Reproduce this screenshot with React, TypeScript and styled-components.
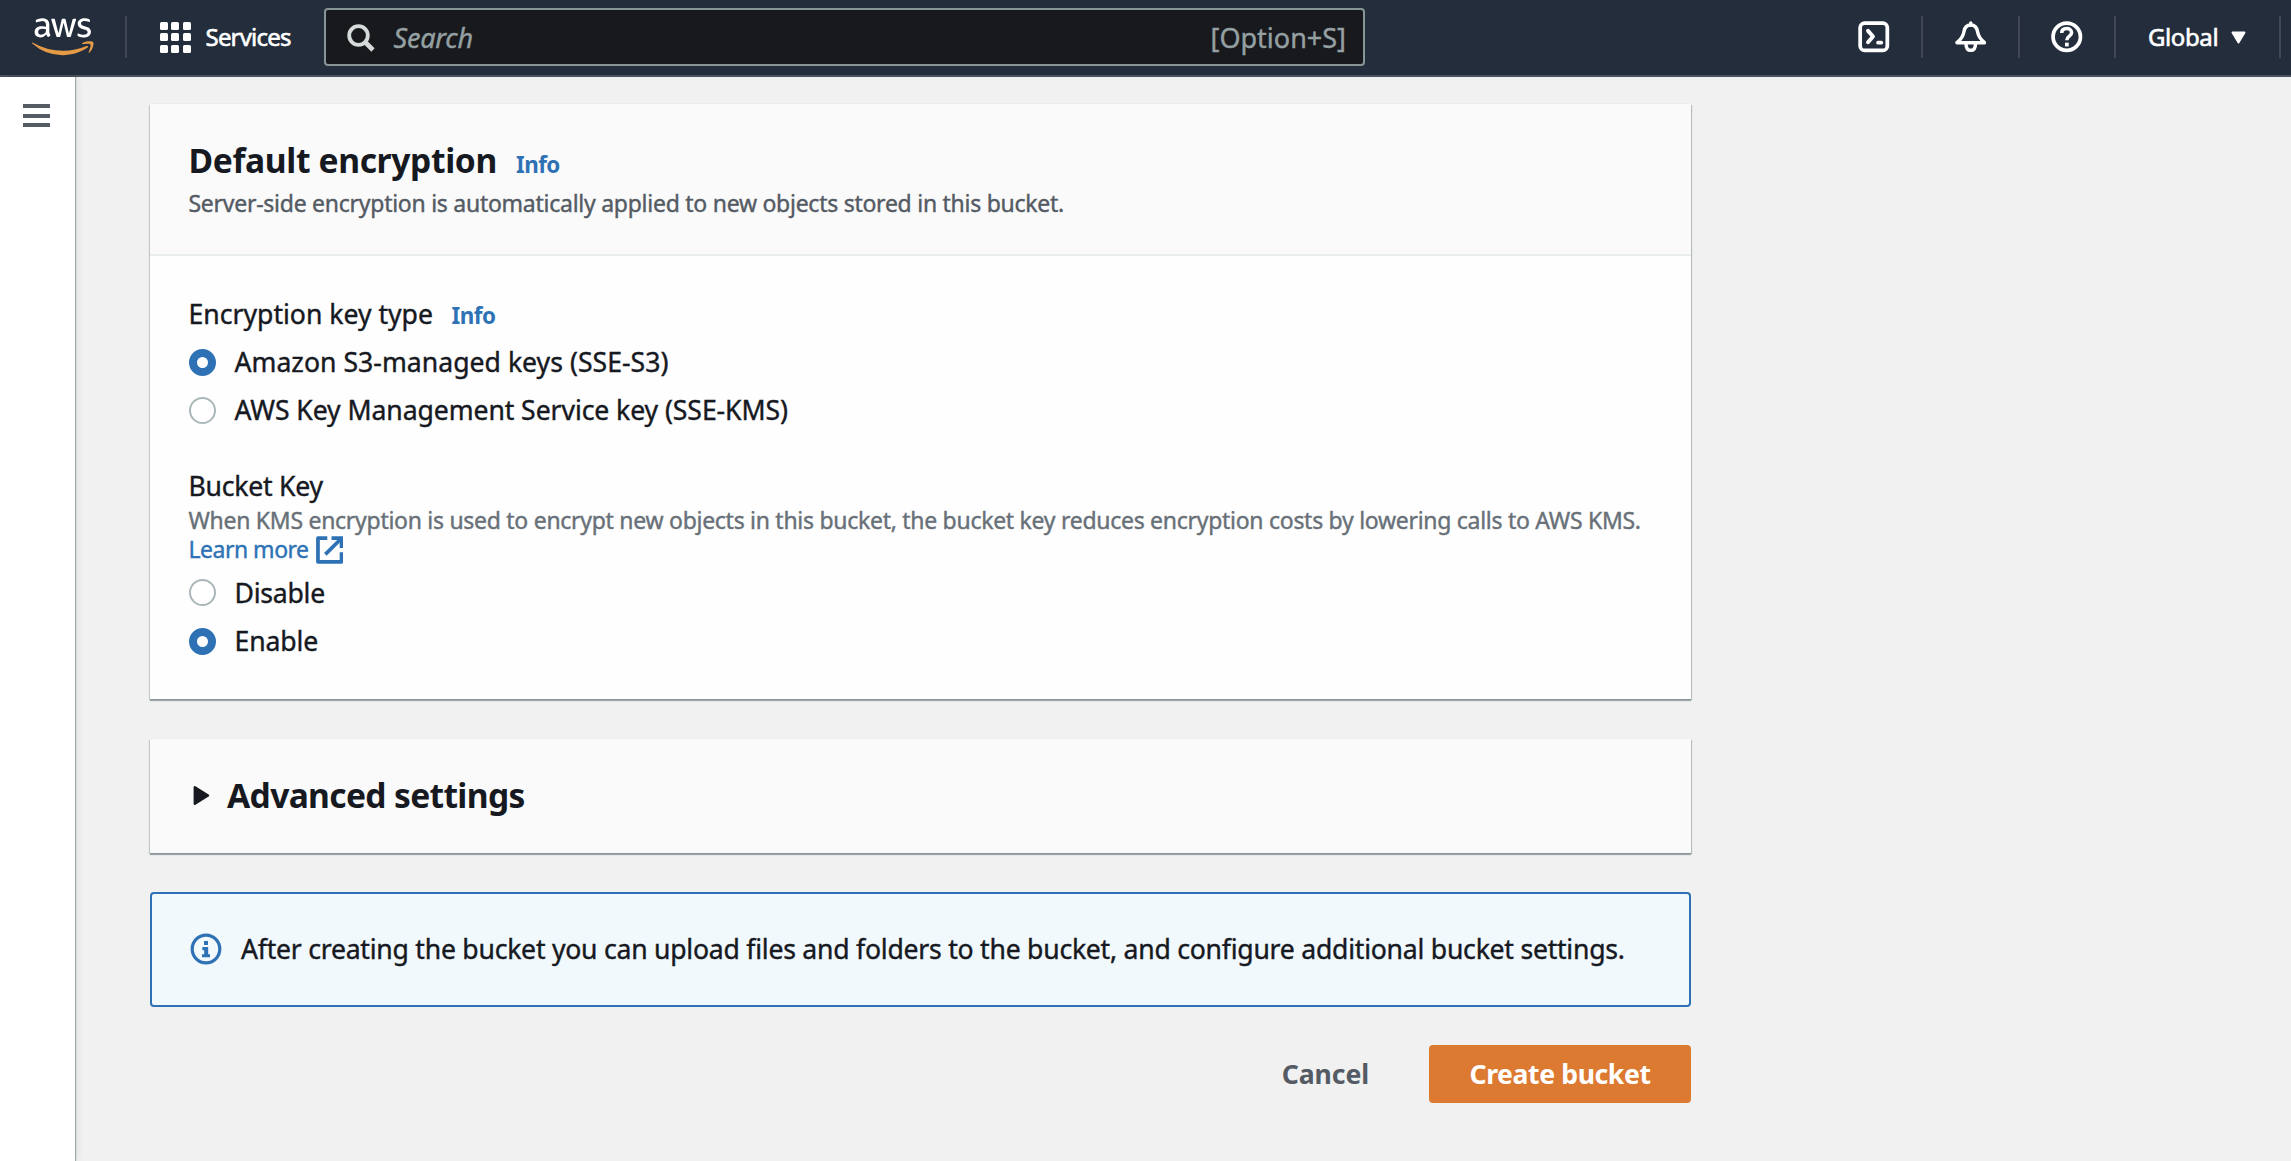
import React, { useState } from 'react';
import styled, { createGlobalStyle, css } from 'styled-components';
import { FaAws } from 'react-icons/fa';

const color = {
  nav: '#242d3c',
  navLine: '#4a525e',
  navDivider: '#414853',
  searchBg: '#17191d',
  searchBorder: '#879596',
  page: '#f1f1f1',
  surface: '#fefefe',
  surfaceAlt: '#fafafa',
  ink: '#16191f',
  muted: '#545b64',
  hint: '#687078',
  link: '#2e72b5',
  orange: '#dd7a32',
};

const GlobalStyle = createGlobalStyle`
  *, *::before, *::after { box-sizing: border-box; }
  body {
    margin: 0;
    background: ${color.page};
    color: ${color.ink};
    font-family: "Noto Sans", "Open Sans", sans-serif;
    -webkit-text-stroke: 0.4px currentColor;
  }
  button { font: inherit; border: 0; background: none; padding: 0; color: inherit; cursor: pointer; }
`;

const Page = styled.div`
  display: flex;
  flex-direction: column;
  width: 2291px;
  height: 1161px;
  overflow: hidden;
`;

/* ---------- top navigation ---------- */

const TopNav = styled.header`
  display: flex;
  align-items: center;
  height: 77px;
  padding: 0 10px 1px 0;
  background: ${color.nav};
  border-bottom: 2px solid ${color.navLine};
  color: #fff;
`;

const Logo = styled.a`
  display: flex;
  width: 125px;
  padding-left: 32px;
  svg { width: 61.5px; height: 49.5px; }
  path { fill: url(#awsFill); }
`;

const GradientDefs = styled.svg`
  width: 0;
  height: 0;
`;

const NavDivider = styled.span`
  flex: none;
  width: 2px;
  height: 42px;
  background: ${color.navDivider};
`;

const ServicesButton = styled.button`
  display: flex;
  align-items: center;
  width: 197px;
  padding-left: 32.5px;
`;

const AppGrid = styled.span`
  display: grid;
  grid-template-columns: repeat(3, 8px);
  gap: 3.5px;
  margin-right: 15px;
`;

const AppDot = styled.span`
  height: 8px;
  border-radius: 1.5px;
  background: #fff;
`;

const NavLabel = styled.span<{ $spacing: number }>`
  padding-bottom: 1px;
  font-size: 24px;
  line-height: 32px;
  letter-spacing: ${(p) => p.$spacing}px;
  -webkit-text-stroke-width: 0.6px;
`;

const SearchBox = styled.div`
  display: flex;
  align-items: center;
  width: 1041px;
  height: 58px;
  padding: 1px 17px 0 21px;
  background: ${color.searchBg};
  border: 2px solid ${color.searchBorder};
  border-radius: 4px;
  color: #95a0a2;
  font-size: 27px;
  line-height: 36px;
`;

const SearchHint = styled.span`
  flex: 1;
  margin-left: 18.5px;
  padding-top: 1px;
  font-style: italic;
  letter-spacing: -0.2px;
`;

const NavRight = styled.div`
  display: flex;
  align-items: center;
  margin-left: auto;
`;

const NavIconButton = styled.button`
  display: flex;
  align-items: center;
  justify-content: center;
  width: 94.5px;
  svg { width: 31.5px; height: 31.5px; }
`;

const RegionButton = styled.button`
  display: flex;
  align-items: center;
  gap: 13px;
  width: 163px;
  padding-left: 32px;
`;

/* ---------- page body ---------- */

const Body = styled.div`
  display: flex;
  flex: 1;
`;

const SideRail = styled.aside`
  width: 75px;
  padding: 27px 0 0 23px;
  background: #fff;
  box-shadow: 1px 0 1px rgba(0, 28, 36, 0.3), 2px 0 8px rgba(0, 28, 36, 0.08);
`;

const MenuButton = styled.button`
  display: flex;
  flex-direction: column;
  gap: 5.6px;
  width: 27px;
`;

const MenuBar = styled.span`
  height: 4px;
  background: ${color.muted};
`;

const Main = styled.main`
  display: flex;
  flex-direction: column;
  width: 1616px;
  padding: 27px 0 0 75px;
`;

const Card = styled.section<{ $gapAfter: number }>`
  margin-bottom: ${(p) => p.$gapAfter}px;
  background: ${color.surface};
  box-shadow: 0 1px 0 #87979a, 0 2px 1px rgba(0, 28, 36, 0.3), 1px 1px 1px rgba(0, 28, 36, 0.2),
    -1px 1px 1px rgba(0, 28, 36, 0.15), 0 -1px 0 rgba(0, 0, 0, 0.02);
`;

const CardHeader = styled.div`
  height: 152px;
  padding: 34px 38px 0 38.5px;
  background: ${color.surfaceAlt};
  border-bottom: 2px solid #eaeded;
`;

const TitleRow = styled.div`
  display: flex;
  align-items: baseline;
`;

const Title = styled.h2<{ $spacing: number }>`
  margin: 0;
  font-size: 33.6px;
  line-height: 44px;
  font-weight: 700;
  letter-spacing: ${(p) => p.$spacing}px;
  -webkit-text-stroke-width: 0;
`;

const InfoLink = styled.a<{ $offset: number }>`
  margin-left: ${(p) => p.$offset}px;
  color: ${color.link};
  font-size: 22.4px;
  line-height: 1;
  font-weight: 700;
  letter-spacing: -0.5px;
  -webkit-text-stroke-width: 0;
`;

const Description = styled.p`
  margin: 5px 0 0;
  color: ${color.muted};
  font-size: 23px;
  line-height: 32px;
  letter-spacing: -0.26px;
`;

const CardBody = styled.div`
  display: flex;
  flex-direction: column;
  gap: 38px;
  height: 442.5px;
  padding: 39px 38px 0 38.5px;
`;

const fieldText = css`
  font-size: 26.6px;
  line-height: 38px;
`;

const Field = styled.fieldset`
  margin: 0;
  padding: 0;
  border: 0;
`;

const FieldLabel = styled.div<{ $spacing?: number }>`
  ${fieldText}
  display: flex;
  align-items: baseline;
  letter-spacing: ${(p) => p.$spacing ?? 0}px;
`;

const Hint = styled.p`
  margin: 1px 0 0;
  color: ${color.hint};
  font-size: 23px;
  line-height: 29px;
  letter-spacing: -0.28px;
  white-space: nowrap;
`;

const LearnMore = styled.a`
  display: flex;
  align-items: center;
  gap: 7px;
  height: 29px;
  color: ${color.link};
  letter-spacing: -0.5px;
`;

const RadioList = styled.div<{ $offset: number }>`
  display: flex;
  flex-direction: column;
  gap: 10.3px;
  margin-top: ${(p) => p.$offset}px;
`;

const RadioRow = styled.label<{ $spacing: number }>`
  ${fieldText}
  display: flex;
  align-items: center;
  gap: 19px;
  letter-spacing: ${(p) => p.$spacing}px;
`;

const RadioMark = styled.span<{ $on: boolean }>`
  width: 27px;
  height: 27px;
  border-radius: 50%;
  background: #fff;
  border: ${(p) => (p.$on ? `8px solid ${color.link}` : '2px solid #aab7b8')};
`;

const ExpandHeader = styled.button`
  display: flex;
  align-items: center;
  width: 100%;
  height: 114px;
  padding: 0 0 3px 43px;
  gap: 17px;
  background: ${color.surfaceAlt};
`;

const Alert = styled.div`
  display: flex;
  align-items: center;
  height: 115px;
  padding-left: 38px;
  gap: 19px;
  background: #f2f9fd;
  border: 2px solid ${color.link};
  border-radius: 4px;
  ${fieldText}
  letter-spacing: -0.24px;
`;

const Actions = styled.div`
  display: flex;
  justify-content: flex-end;
  align-items: center;
  gap: 60px;
  margin-top: 38.5px;
  font-size: 26.6px;
  font-weight: 700;
  -webkit-text-stroke-width: 0;
`;

const CancelButton = styled.button`
  padding-bottom: 1px;
  color: ${color.muted};
  letter-spacing: -0.1px;
`;

const PrimaryButton = styled.button`
  width: 262px;
  height: 58px;
  padding-bottom: 1px;
  background: ${color.orange};
  border-radius: 4px;
  color: #fff;
  letter-spacing: -0.4px;
`;

/* ---------- icons ---------- */

const SearchIcon = () => (
  <svg width="28" height="28" viewBox="0 0 28 28" fill="none" stroke="#d5dbdb" strokeWidth="3.8">
    <circle cx="11.5" cy="11.5" r="9.3" />
    <path d="M18 18l8 8" strokeWidth="4.6" />
  </svg>
);

const TerminalIcon = () => (
  <svg viewBox="0 0 32 32" fill="none" stroke="#fff" strokeWidth="3.8" strokeLinecap="round" strokeLinejoin="round">
    <rect x="2.2" y="2.2" width="27.6" height="27.6" rx="4.5" />
    <path d="M10.200 10l5 5.800-5 5.800" strokeWidth="4" />
    <path d="M20.400 22h3.200" strokeWidth="3.800" />
  </svg>
);

const BellIcon = () => (
  <svg viewBox="0 0 32 32" fill="none" stroke="#fff" strokeWidth="3.5" strokeLinejoin="round" strokeLinecap="round">
    <path d="M16 2v2" />
    <path d="M16 4C12 4 9.600 6.400 9 11.200C8.300 16 6.400 18.400 2 22H30C25.600 18.400 23.700 16 23 11.200C22.400 6.400 20 4 16 4z" />
    <path d="M11.200 23c0 4.200 1.500 6.800 4.800 6.800s4.800-2.600 4.800-6.800" />
  </svg>
);

const HelpIcon = () => (
  <svg viewBox="0 0 32 32" fill="none" stroke="#fff" strokeWidth="3.8">
    <circle cx="16" cy="16" r="13.900" />
    <path d="M10.900 12.200c0-3 2.200-4.500 5-4.500s5 1.500 5 4.200c0 3.600-4.800 3.500-4.800 7.600" strokeWidth="3.600" />
    <path d="M14.200 22h3.800v3.800h-3.800z" fill="#fff" stroke="none" />
  </svg>
);

const CaretDown = () => (
  <svg width="15" height="13" viewBox="0 0 15 13">
    <path d="M1.500 1.500h12L7.500 11.500z" fill="#fff" stroke="#fff" strokeWidth="2" strokeLinejoin="round" />
  </svg>
);

const CaretRight = () => (
  <svg width="17" height="23" viewBox="0 0 17 23">
    <path
      d="M1.800 4.200L15 12.500 1.800 20.800z"
      fill={color.ink}
      stroke={color.ink}
      strokeWidth="2.400"
      strokeLinejoin="round"
    />
  </svg>
);

const ExternalIcon = () => (
  <svg width="27.500" height="28" viewBox="0 0 28 28" fill="none" stroke={color.link} strokeWidth="3.800">
    <path d="M11.500 2H2v24h24v-9.800" strokeLinejoin="round" />
    <path d="M15.800 2H26v10" />
    <path d="M25.500 2.500L9.500 18.500" />
  </svg>
);

const InfoIcon = () => (
  <svg width="32" height="32" viewBox="0 0 32 32" fill="none">
    <circle cx="16" cy="16" r="13.800" stroke={color.link} strokeWidth="3.200" />
    <path
      d="M14 8h4v4h-4zM12.400 14h5.800v7.200h1.800V24.200h-8v-3h2.200v-4h-1.800z"
      fill={color.link}
    />
  </svg>
);

/* ---------- screen ---------- */

type Option = { id: string; label: string; spacing: number };

const keyTypes: Option[] = [
  { id: 's3', label: 'Amazon S3-managed keys (SSE-S3)', spacing: 0.03 },
  { id: 'kms', label: 'AWS Key Management Service key (SSE-KMS)', spacing: -0.08 },
];

const bucketKeyStates: Option[] = [
  { id: 'off', label: 'Disable', spacing: -0.25 },
  { id: 'on', label: 'Enable', spacing: -0.1 },
];

function RadioGroup({ options, initial, offset }: { options: Option[]; initial: string; offset: number }) {
  const [value, setValue] = useState(initial);
  return (
    <RadioList role="radiogroup" $offset={offset}>
      {options.map((o) => (
        <RadioRow key={o.id} $spacing={o.spacing} onClick={() => setValue(o.id)}>
          <RadioMark $on={o.id === value} role="radio" aria-checked={o.id === value} />
          {o.label}
        </RadioRow>
      ))}
    </RadioList>
  );
}

export default function App() {
  return (
    <Page>
      <GlobalStyle />
      <TopNav>
        <GradientDefs aria-hidden>
          <defs>
            <linearGradient id="awsFill" gradientUnits="userSpaceOnUse" x1="0" y1="0" x2="0" y2="512">
              <stop offset="0.57" stopColor="#fff" />
              <stop offset="0.57" stopColor="#e59a45" />
            </linearGradient>
          </defs>
        </GradientDefs>
        <Logo>
          <FaAws />
        </Logo>
        <NavDivider />
        <ServicesButton>
          <AppGrid>
            {Array.from({ length: 9 }, (_, i) => (
              <AppDot key={i} />
            ))}
          </AppGrid>
          <NavLabel $spacing={-0.8}>Services</NavLabel>
        </ServicesButton>
        <SearchBox>
          <SearchIcon />
          <SearchHint>Search</SearchHint>
          <span>[Option+S]</span>
        </SearchBox>
        <NavRight>
          <NavIconButton aria-label="CloudShell">
            <TerminalIcon />
          </NavIconButton>
          <NavDivider />
          <NavIconButton aria-label="Notifications">
            <BellIcon />
          </NavIconButton>
          <NavDivider />
          <NavIconButton aria-label="Help">
            <HelpIcon />
          </NavIconButton>
          <NavDivider />
          <RegionButton>
            <NavLabel $spacing={-0.4}>Global</NavLabel>
            <CaretDown />
          </RegionButton>
          <NavDivider />
        </NavRight>
      </TopNav>

      <Body>
        <SideRail>
          <MenuButton aria-label="Open navigation">
            <MenuBar />
            <MenuBar />
            <MenuBar />
          </MenuButton>
        </SideRail>

        <Main>
          <Card $gapAfter={40.5}>
            <CardHeader>
              <TitleRow>
                <Title $spacing={-0.36}>Default encryption</Title>
                <InfoLink $offset={19}>Info</InfoLink>
              </TitleRow>
              <Description>
                Server-side encryption is automatically applied to new objects stored in this bucket.
              </Description>
            </CardHeader>
            <CardBody>
              <Field>
                <FieldLabel>
                  Encryption key type
                  <InfoLink $offset={18.5}>Info</InfoLink>
                </FieldLabel>
                <RadioGroup options={keyTypes} initial="s3" offset={10} />
              </Field>
              <Field>
                <FieldLabel $spacing={-0.24}>Bucket Key</FieldLabel>
                <Hint>
                  When KMS encryption is used to encrypt new objects in this bucket, the bucket key reduces
                  encryption costs by lowering calls to AWS KMS.
                  <LearnMore>
                    Learn more
                    <ExternalIcon />
                  </LearnMore>
                </Hint>
                <RadioGroup options={bucketKeyStates} initial="on" offset={9.5} />
              </Field>
            </CardBody>
          </Card>

          <Card $gapAfter={38.5}>
            <ExpandHeader>
              <CaretRight />
              <Title as="span" $spacing={-0.66}>
                Advanced settings
              </Title>
            </ExpandHeader>
          </Card>

          <Alert>
            <InfoIcon />
            After creating the bucket you can upload files and folders to the bucket, and configure additional
            bucket settings.
          </Alert>

          <Actions>
            <CancelButton>Cancel</CancelButton>
            <PrimaryButton>Create bucket</PrimaryButton>
          </Actions>
        </Main>
      </Body>
    </Page>
  );
}
